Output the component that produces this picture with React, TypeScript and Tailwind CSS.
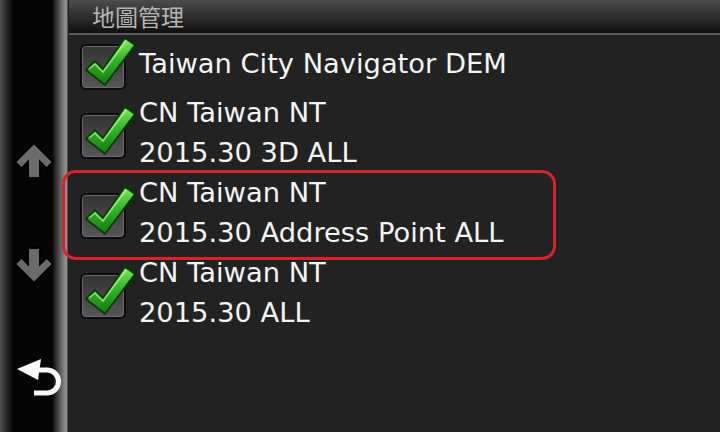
import React from "react";

const Check = () => (
  <div className="relative w-[46px] h-[46px] shrink-0 mt-[6px]">
    <div className="absolute inset-0 rounded-[6px] border-2 border-[#0c0c0c] bg-[linear-gradient(to_bottom,#343434,#575757)] shadow-[inset_0_0_0_1px_#6a6a6a]" />
    <svg className="absolute left-0 top-[-9px]" width="58" height="57" viewBox="0 -9 58 57">
      <defs>
        <linearGradient id="g" x1="0" y1="0" x2="0" y2="1">
          <stop offset="0" stopColor="#86e862" />
          <stop offset="0.45" stopColor="#33b626" />
          <stop offset="1" stopColor="#127a0d" />
        </linearGradient>
      </defs>
      <polygon
        points="6,26 15,17 23,25 45,-6 55,1 25,41"
        fill="url(#g)"
        stroke="#0b3a06"
        strokeWidth="1.8"
        strokeLinejoin="round"
      />
      <polyline points="9,25 15,20 23,28 46,-3" fill="none" stroke="#b4f49a" strokeWidth="1.6" opacity="0.75" />
    </svg>
  </div>
);

const Row = ({ lines, first, children }: { lines: string[]; first?: boolean; children?: React.ReactNode }) => (
  <div className={`relative flex items-center pl-[11px] ${first ? "h-[58px]" : "h-[80px]"}`}>
    {children}
    <Check />
    <div className="ml-[13px] flex flex-col">
      {lines.map((l) => (
        <div key={l} className="h-[40px] leading-[40px] text-[27.3px] text-[#f4f4f4] whitespace-nowrap">
          {l}
        </div>
      ))}
    </div>
  </div>
);

export default function App() {
  return (
    <div
      className="w-[720px] h-[432px] flex overflow-hidden bg-[#222]"
      style={{ fontFamily: '"DejaVu Sans", sans-serif' }}
    >
      <div className="w-[69px] shrink-0 h-full flex flex-col items-start bg-[linear-gradient(to_right,#505050_0px,#050505_13px,#050505_52px,#8c8c8c_65px,#8c8c8c_67px,#1e1e1e_68px)]">
        <svg className="ml-[14px] mt-[141px]" width="41" height="39" viewBox="-1 -1 41 39">
          <polygon
            points="19,1 38,20 31.6,26.4 25,19.7 25,36 13,36 13,19.7 6.4,26.4 0,20"
            fill="#6b6b6b"
            stroke="#000"
            strokeWidth="2"
            strokeLinejoin="miter"
          />
        </svg>
        <svg className="ml-[14px] mt-[66px]" width="41" height="39" viewBox="-1 -1 41 39">
          <polygon
            points="19,36 38,17 31.6,10.6 25,17.3 25,1 13,1 13,17.3 6.4,10.6 0,17"
            fill="#6b6b6b"
            stroke="#000"
            strokeWidth="2"
            strokeLinejoin="miter"
          />
        </svg>
        <svg className="ml-[15px] mt-[71px]" width="46" height="40" viewBox="0 0 46 40">
          <polygon points="2,13 26,3 23,24" fill="#fafafa" />
          <path d="M20 14 H32 A11.5 11.5 0 0 1 32 37 H19" fill="none" stroke="#fafafa" strokeWidth="5" />
        </svg>
      </div>
      <div className="flex-1 flex flex-col">
        <div className="h-[33px] bg-[linear-gradient(to_bottom,#4c4c4c,#0f0f0f)] pl-[23px] flex items-center">
          <span
            className="text-[23px] text-[#b5b5b5] leading-none"
            style={{ fontFamily: '"Noto Sans CJK TC", "DejaVu Sans", sans-serif' }}
          >
            地圖管理
          </span>
        </div>
        <div className="h-[2px] bg-[#5c5c5c]" />
        <Row first lines={["Taiwan City Navigator DEM"]} />
        <Row lines={["CN Taiwan NT", "2015.30 3D ALL"]} />
        <Row lines={["CN Taiwan NT", "2015.30 Address Point ALL"]}>
          <div className="absolute left-[-7px] top-[-3px] w-[494px] h-[90px] rounded-[14px] border-[3px] border-[#d8232c] pointer-events-none" />
        </Row>
        <Row lines={["CN Taiwan NT", "2015.30 ALL"]} />
      </div>
    </div>
  );
}
